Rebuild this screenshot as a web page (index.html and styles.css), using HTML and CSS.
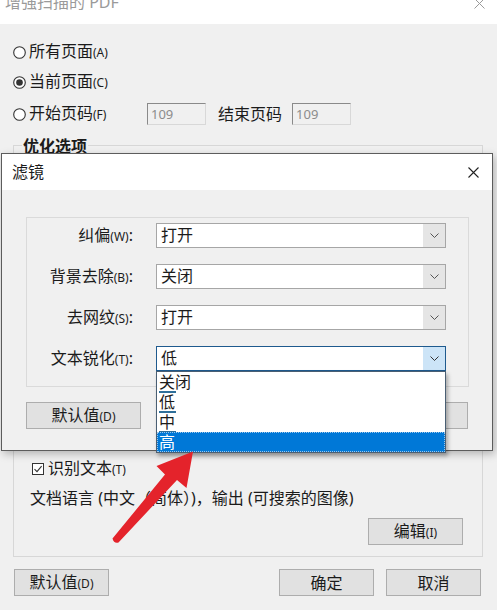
FILE: index.html
```html
<!DOCTYPE html>
<html>
<head>
<meta charset="utf-8">
<link rel="stylesheet" href="styles.css">
</head>
<body>
<div class="win">
  <div class="titlebar">
    <span class="title">增强扫描的 PDF</span>
    <svg class="close-bg" width="11" height="11" viewBox="0 0 11 11"><path d="M0.5 0.5L10.5 10.5M10.5 0.5L0.5 10.5" stroke="#9a9a9a" stroke-width="1"/></svg>
  </div>
  <div class="main">
    <div class="radios">
      <div class="radio-row">
        <svg class="radio" viewBox="0 0 13 13"><circle cx="6.5" cy="6.5" r="5.8" fill="#fff" stroke="#333" stroke-width="1.1"/></svg>
        <span>所有页面<span class="acc">(A)</span></span>
      </div>
      <div class="radio-row">
        <svg class="radio" viewBox="0 0 13 13"><circle cx="6.5" cy="6.5" r="5.8" fill="#fff" stroke="#333" stroke-width="1.1"/><circle cx="6.5" cy="6.5" r="3.3" fill="#333"/></svg>
        <span>当前页面<span class="acc">(C)</span></span>
      </div>
      <div class="radio-row third">
        <svg class="radio" viewBox="0 0 13 13"><circle cx="6.5" cy="6.5" r="5.8" fill="#fff" stroke="#333" stroke-width="1.1"/></svg>
        <span class="rlabel">开始页码<span class="acc">(F)</span></span>
        <span class="pagebox">109</span>
        <span class="endlabel">结束页码</span>
        <span class="pagebox">109</span>
      </div>
    </div>
    <div class="group">
      <div class="gtitle">优化选项</div>
      <div class="check-row">
        <svg class="check" viewBox="0 0 12 12"><rect x="0.5" y="0.5" width="11" height="11" fill="#fff" stroke="#333"/><path d="M2.5 6.2L5 8.6L9.6 3.2" fill="none" stroke="#333" stroke-width="1.1"/></svg>
        <span>识别文本<span class="acc">(T)</span></span>
      </div>
      <div class="lang">文档语言 (中文（简体）)，输出 (可搜索的图像)</div>
      <div class="edit-row"><button class="btn">编辑<span class="acc">(I)</span></button></div>
    </div>
    <div class="footer">
      <button class="btn first">默认值<span class="acc">(D)</span></button>
      <div class="okcancel">
        <button class="btn">确定</button>
        <button class="btn">取消</button>
      </div>
    </div>
  </div>

  <div class="dialog">
    <div class="dtitle">
      <span>滤镜</span>
      <svg width="11" height="11" viewBox="0 0 11 11"><path d="M0.5 0.5L10.5 10.5M10.5 0.5L0.5 10.5" stroke="#222" stroke-width="1.1"/></svg>
    </div>
    <div class="dbody">
      <div class="fgroup">
        <div class="frow">
          <span class="flabel">纠偏<span class="acc">(W)</span>:</span>
          <div class="sel"><span class="val">打开</span><span class="dd"><svg width="9" height="5" viewBox="0 0 9 5"><path d="M0.5 0.5L4.5 4.5L8.5 0.5" fill="none" stroke="#555"/></svg></span></div>
        </div>
        <div class="frow">
          <span class="flabel">背景去除<span class="acc">(B)</span>:</span>
          <div class="sel"><span class="val">关闭</span><span class="dd"><svg width="9" height="5" viewBox="0 0 9 5"><path d="M0.5 0.5L4.5 4.5L8.5 0.5" fill="none" stroke="#555"/></svg></span></div>
        </div>
        <div class="frow">
          <span class="flabel">去网纹<span class="acc">(S)</span>:</span>
          <div class="sel"><span class="val">打开</span><span class="dd"><svg width="9" height="5" viewBox="0 0 9 5"><path d="M0.5 0.5L4.5 4.5L8.5 0.5" fill="none" stroke="#555"/></svg></span></div>
        </div>
        <div class="frow">
          <span class="flabel">文本锐化<span class="acc">(T)</span>:</span>
          <div class="sel focus"><span class="val">低</span><span class="dd"><svg width="9" height="5" viewBox="0 0 9 5"><path d="M0.5 0.5L4.5 4.5L8.5 0.5" fill="none" stroke="#333"/></svg></span>
            <div class="list">
              <div class="item u">关闭</div>
              <div class="item u">低</div>
              <div class="item u">中</div>
              <div class="item hl">高</div>
            </div>
          </div>
        </div>
      </div>
      <div class="fbtns">
        <button class="btn wide">默认值<span class="acc">(D)</span></button>
        <button class="btn wide">确定</button>
      </div>
    </div>
  </div>

  <svg class="arrow" width="497" height="610" viewBox="0 0 497 610">
    <path d="M112.5 538.5 L165 474.5 L156.5 466 L193 451.5 L186.5 488 L177 480 L118.5 542.5 Q114 544 112.5 538.5 Z" fill="#e4232b"/>
  </svg>
</div>
</body>
</html>
```
FILE: styles.css
```css
* { box-sizing: border-box; }
html, body { margin: 0; padding: 0; }
body {
  width: 497px;
  height: 610px;
  overflow: hidden;
  font-family: "Noto Sans", "Noto Sans CJK SC", sans-serif;
  font-size: 16px;
  color: #1b1b1b;
  background: #f0f0f0;
}
.win {
  position: relative;
  width: 497px;
  height: 610px;
  background: #f0f0f0;
  overflow: hidden;
}
.titlebar {
  height: 24px;
  background: #fff;
  display: flex;
  justify-content: space-between;
  align-items: flex-start;
  overflow: hidden;
  padding: 0 12px 0 5px;
}
.title {
  margin-top: -7px;
  line-height: 18px;
  color: #9a9a9a;
}
.close-bg { margin-top: -2px; }
.main { padding-left: 13px; }
.radios {
  padding-top: 16px;
  display: flex;
  flex-direction: column;
  gap: 6px;
}
.radio-row {
  height: 24px;
  display: flex;
  align-items: center;
  line-height: 20px;
}
.radio-row.third { margin-top: 2px; }
.radio { width: 13px; height: 13px; flex: none; margin-right: 3px; }
.acc { font-size: 12px; }
.rlabel { width: 118px; flex: none; }
.pagebox {
  width: 59px;
  height: 22px;
  border: 1px solid;
  border-color: #8a8a8a #d8d8d8 #d8d8d8 #8a8a8a;
  background: #f0f0f0;
  color: #8c8c8c;
  font-size: 13px;
  line-height: 20px;
  padding-left: 3px;
}
.endlabel { margin: 0 10px 0 12px; }
.group {
  margin-top: 19px;
  width: 470px;
  height: 412px;
  border: 1px solid #d7d7d7;
}
.gtitle {
  margin: -8px 0 0 8px;
  width: fit-content;
  line-height: 16px;
  font-weight: bold;
  background: #f0f0f0;
  padding: 0 1px;
}
.check-row {
  margin: 307px 0 0 18px;
  height: 16px;
  display: flex;
  align-items: center;
  line-height: 16px;
}
.check { width: 12px; height: 12px; margin-right: 4px; }
.lang {
  margin: 13px 0 0 16px;
  line-height: 16px;
  height: 16px;
  white-space: nowrap;
}
.edit-row {
  margin-top: 12px;
  display: flex;
  justify-content: flex-end;
  padding-right: 19px;
}
.btn {
  width: 95px;
  height: 27px;
  background: #e1e1e1;
  border: 1px solid #adadad;
  font-family: "Noto Sans", "Noto Sans CJK SC", sans-serif;
  font-size: 16px;
  color: #1b1b1b;
  padding: 0;
  line-height: 24px;
}
.footer {
  margin-top: 12px;
  display: flex;
  justify-content: space-between;
  padding-right: 16px;
}
.btn.first { margin-left: 1px; }
.okcancel { display: flex; gap: 12px; }

.dialog {
  position: absolute;
  left: 1px;
  top: 153px;
  width: 492px;
  height: 298px;
  border: 1px solid #5c5c5c;
  background: #f0f0f0;
  box-shadow: 2px 3px 8px rgba(0, 0, 0, 0.25);
  z-index: 2;
}
.dtitle {
  height: 36px;
  background: #fff;
  display: flex;
  align-items: center;
  justify-content: space-between;
  padding: 0 13px 0 10px;
  line-height: 20px;
}
.dbody { padding: 27px 0 0 24px; }
.fgroup {
  width: 443px;
  height: 170px;
  border: 1px solid #dadada;
  padding-top: 5px;
}
.frow {
  display: flex;
  align-items: center;
  height: 25px;
  margin-bottom: 16px;
}
.flabel {
  width: 106px;
  text-align: right;
  flex: none;
  line-height: 20px;
  white-space: nowrap;
}
.sel {
  position: relative;
  margin-left: 23px;
  width: 290px;
  height: 25px;
  border: 1px solid #a6a6a6;
  background: #fff;
  display: flex;
}
.val {
  flex: 1;
  padding-left: 4px;
  line-height: 23px;
}
.dd {
  width: 22px;
  background: #e5e5e5;
  display: flex;
  align-items: center;
  justify-content: center;
}
.sel.focus { border-color: #1e5a8e; }
.sel.focus .dd { background: #cce4f7; }
.list {
  position: absolute;
  left: -1px;
  top: calc(100% + 1px);
  width: 290px;
  border: 1px solid #4a5f73;
  background: #fff;
  box-shadow: 2px 3px 4px rgba(0, 0, 0, 0.3);
  z-index: 5;
}
.item {
  position: relative;
  height: 20px;
  line-height: 20px;
  padding-left: 2px;
}
.item.u::after {
  content: "";
  position: absolute;
  left: 2px;
  bottom: -1px;
  width: 17px;
  height: 2px;
  background: #2e6f9a;
}
.item.hl {
  background: #0078d7;
  color: #fff;
  outline: 1px dotted #9cc7ec;
  outline-offset: -1px;
}
.fbtns {
  margin-top: 15px;
  width: 442px;
  display: flex;
  justify-content: space-between;
}
.btn.wide { width: 115px; }
.arrow {
  position: absolute;
  left: 0;
  top: 0;
  z-index: 10;
  pointer-events: none;
}
```
